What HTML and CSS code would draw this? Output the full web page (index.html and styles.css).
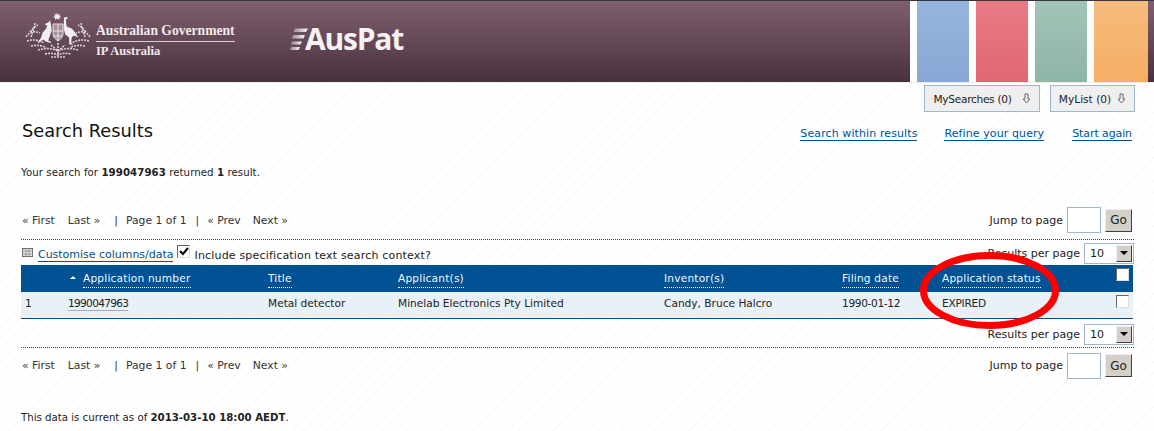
FILE: index.html
```html
<!DOCTYPE html>
<html lang="en">
<head>
<meta charset="utf-8">
<title>AusPat Search Results</title>
<link rel="stylesheet" href="styles.css">
</head>
<body>
<header class="banner">
  <div class="gov">
    <svg class="crest" width="66" height="47" viewBox="0 0 66 47">
      <g fill="none" stroke="#d9d2d6" stroke-width="1.600" stroke-dasharray="2 1">
        <path d="M1 25c4-6 9-6 14-4M2 29c6-2 12-1 17 2M6 34c5-1 11-1 15 2M5 20c3-4 6-6 8-7M9 16l1-5M6 25l3-9"/>
        <path d="M65 25c-4-6-9-6-14-4M64 29c-6-2-12-1-17 2M60 34c-5-1-11-1-15 2M61 20c-3-4-6-6-8-7M57 16l-1-5M60 25l-3-9"/>
        <path d="M13 38c7-2 14-2 20 1 6-3 13-3 20-1M20 42c5-1 9-1 13 1 4-2 8-2 13-1M26 45h14M33 31v13M26 33l7 6 7-6"/>
      </g>
      <g fill="#f3eff1">
        <path d="M32 .500l1 2.200 2.300-.7-1 2.100 2.100 1.100-2.300.5.2 2.300-2.300-1.500-2 1.500.2-2.300-2.300-.5 2.100-1.100-1-2.100 2.300.7z"/>
        <path d="M25 8l-1.500 2.500-3 1-.3 1.500 2 .6-1 3-3.500 4-1.500 5-3.500 5 1 .5 4.500-3.500 2.500 2 5 1.500.5-1-3-1.500 1.500-4 2-6-.5-4.500z"/>
        <path d="M39 5.500l3-.5.7 1.500-2 1 1 7 5 2 3.500 4 3 5-4.500-2-2 2-.5 5.500 2 1.500-4 0 0-7-4-3-1.500-6z"/>
      </g>
      <path d="M28 12h10v9c0 4-2 6-5 8-3-2-5-4-5-8z" fill="#a58e99" stroke="#e8e2e5"/>
      <path d="M33 12v17M28 19h10M28 24h9" stroke="#e8e2e5" fill="none"/>
    </svg>
    <div class="gov-text">
      <div class="gov-name">Australian Government</div>
      <div class="gov-org">IP Australia</div>
    </div>
  </div>
  <div class="brand">
    <svg class="brand-mark" width="20" height="24" viewBox="0 0 20 24">
      <defs>
        <linearGradient id="fade" x1="0" x2="1" y1="0" y2="0">
          <stop offset="0" stop-color="#d8d0d4" stop-opacity=".5"/>
          <stop offset="1" stop-color="#ffffff"/>
        </linearGradient>
      </defs>
      <g fill="url(#fade)">
        <path d="M5 1.500h13l-2 3.500H3.500z"/>
        <path d="M3 8h12l-1.500 3.500H2z"/>
        <path d="M2 14.500h10l-1.500 3H1z"/>
        <path d="M1 20h9l-1.500 3H0z"/>
      </g>
    </svg>
    <span class="brand-name">AusPat</span>
  </div>
  <div class="tiles">
    <span class="tile tile-blue"></span>
    <span class="tile tile-red"></span>
    <span class="tile tile-green"></span>
    <span class="tile tile-orange"></span>
  </div>
</header>

<main class="page">
  <div class="my-bar">
    <a class="my-btn my-searches"><span class="my-label">MySearches (0)</span> <svg width="9" height="11" viewBox="0 0 9 11"><path d="M3 1h3v5h2L4.500 10 1 6h2z" fill="none" stroke="#666"/></svg></a>
    <a class="my-btn my-list">MyList (0) <svg width="9" height="11" viewBox="0 0 9 11"><path d="M3 1h3v5h2L4.500 10 1 6h2z" fill="none" stroke="#666"/></svg></a>
  </div>

  <div class="title-row">
    <h1>Search Results</h1>
    <nav class="actions">
      <a href="#" class="within">Search within results</a>
      <a href="#">Refine your query</a>
      <a href="#" class="start">Start again</a>
    </nav>
  </div>

  <p class="summary">Your search for <b>199047963</b> returned <b>1</b> result.</p>

  <div class="pager pager-top">
    <div class="pager-links"><span class="first">« First</span><span class="last">Last »</span><span class="sep">|</span><span class="page-n">Page 1 of 1</span><span class="sep">|</span><span class="prev">« Prev</span><span>Next »</span></div>
    <div class="jump"><span>Jump to page</span><span class="jump-input"></span><span class="go">Go</span></div>
  </div>

  <div class="tools">
    <svg class="grid-icon" width="11" height="9" viewBox="0 0 11 9"><rect x=".5" y=".5" width="10" height="8" fill="#e8e8e8" stroke="#666"/><path d="M0 3h11M0 6h11M4 0v9M7 0v9" stroke="#999"/></svg>
    <a href="#" class="customise">Customise columns/data</a>
    <span class="check checked"><svg width="10" height="9" viewBox="0 0 10 9"><path d="M1 4l3 3 5-6" fill="none" stroke="#000" stroke-width="2"/></svg></span>
    <span class="context">Include specification text search context?</span>
    <div class="per-page"><span>Results per page</span><span class="select"><span>10</span><span class="arrow"></span></span></div>
  </div>

  <table class="results">
    <thead>
      <tr>
        <th class="c-idx"></th>
        <th class="c-num"><span class="sort"></span><span class="hd">Application number</span></th>
        <th class="c-title"><span class="hd">Title</span></th>
        <th class="c-app"><span class="hd">Applicant(s)</span></th>
        <th class="c-inv"><span class="hd">Inventor(s)</span></th>
        <th class="c-date"><span class="hd">Filing date</span></th>
        <th class="c-status"><span class="hd">Application status</span></th>
        <th class="c-check"><span class="check head-check"></span></th>
      </tr>
    </thead>
    <tbody>
      <tr>
        <td class="c-idx">1</td>
        <td class="c-num"><a href="#" class="num-link">1990047963</a></td>
        <td>Metal detector</td>
        <td>Minelab Electronics Pty Limited</td>
        <td>Candy, Bruce Halcro</td>
        <td class="date">1990-01-12</td>
        <td class="status">EXPIRED</td>
        <td class="c-check"><span class="check"></span></td>
      </tr>
    </tbody>
  </table>

  <div class="per-page per-page-bottom"><span>Results per page</span><span class="select"><span>10</span><span class="arrow"></span></span></div>

  <div class="pager pager-bottom">
    <div class="pager-links"><span class="first">« First</span><span class="last">Last »</span><span class="sep">|</span><span class="page-n">Page 1 of 1</span><span class="sep">|</span><span class="prev">« Prev</span><span>Next »</span></div>
    <div class="jump"><span>Jump to page</span><span class="jump-input"></span><span class="go">Go</span></div>
  </div>

  <p class="current">This data is current as of <b>2013-03-10 18:00 AEDT</b>.</p>
</main>

<svg class="ring" width="144" height="82" viewBox="0 0 144 82"><ellipse cx="71.500" cy="40.500" rx="66" ry="35" fill="none" stroke="#f00" stroke-width="7"/></svg>
</body>
</html>
```
FILE: styles.css
```css
* { box-sizing: border-box; }
html, body { margin: 0; padding: 0; }
body {
  position: relative;
  width: 1154px;
  height: 431px;
  overflow: hidden;
  font-family: "DejaVu Sans", Verdana, sans-serif;
  font-size: 10.600px;
  color: #222;
  background: repeating-linear-gradient(135deg, #fff 0 7px, #f8f9fb 7px 8px);
}
a { color: inherit; text-decoration: none; }

.banner {
  display: flex;
  height: 82px;
  border-top: 1px solid #3a3440;
  background: linear-gradient(#7f5f6d, #483140);
  color: #efe9ec;
  box-shadow: 0 1px 0 #eee;
}
.gov { display: flex; width: 270px; padding: 11px 0 0 25px; }
.crest { flex: none; margin-right: 5px; }
.gov-text { font-family: "Liberation Serif", serif; font-weight: bold; padding-top: 11px; }
.gov-name {
  font-size: 13.600px;
  line-height: 16px;
  width: 139px;
  white-space: nowrap;
  border-bottom: 1px solid #d8d0d4;
  padding-bottom: 2px;
}
.gov-org { font-size: 12.500px; line-height: 16px; padding-top: 1px; }
.brand { display: flex; align-items: center; height: 50px; padding: 26px 0 0 20px; width: 640px; }
.brand-mark { flex: none; margin-right: -5px; }
.brand-name { font-family: "Open Sans", sans-serif; font-size: 30px; font-weight: 700; color: #f6f2f4; letter-spacing: -1.200px; line-height: 30px; }
.tiles { display: flex; background: #fff; height: 81px; padding-left: 7px; gap: 7px; flex: none; width: 238px; }
.tile { display: block; width: 52px; }
.tile-blue { background: linear-gradient(#96b5dd, #87a8d5); }
.tile-red { background: linear-gradient(#e87b86, #e06672); }
.tile-green { background: linear-gradient(#a2c4b6, #8fb5a6); }
.tile-orange { background: linear-gradient(#f6bb7c, #f5ae64); width: 54px; }

.page { padding: 0 22px 0 21px; }

.my-bar { display: flex; justify-content: flex-end; gap: 10px; padding: 3px 0 0; margin-right: -3px; }
.my-btn {
  display: flex;
  align-items: center;
  justify-content: center;
  gap: 6px;
  height: 27px;
  background: #efefef;
  border: 1px solid #a3b5cc;
  color: #222;
}
.my-searches { width: 116px; gap: 10px; }
.my-label { letter-spacing: -.3px; }
.my-list { width: 85px; }

.title-row { display: flex; justify-content: space-between; align-items: center; height: 26px; margin-top: 5px; padding-left: 1px; }
h1 { margin: 0; font-size: 17.800px; font-weight: normal; color: #111; }
.actions { display: flex; gap: 28px; padding-top: 7px; }
.actions a { color: #00508f; border-bottom: 1px solid #00508f; line-height: 13px; font-size: 11px; letter-spacing: .1px; }
.actions .within { margin-right: -1px; }
.actions .start { letter-spacing: -.1px; }

.summary { margin: 23px 0 0; height: 14px; line-height: 14px; font-size: 10.200px; letter-spacing: .07px; }
.summary b, .current b { color: #222; }

.pager { display: flex; justify-content: space-between; align-items: center; }
.pager-top { margin-top: 27px; height: 26px; }
.pager-links { display: flex; padding-left: 1px; color: #333; font-size: 10.800px; }
.first { margin-right: 13px; }
.last { margin-right: 14px; }
.sep { margin-right: 8px; }
.page-n { margin-right: 9px; }
.prev { margin-right: 12px; }
.jump { display: flex; align-items: center; font-size: 11px; }
.jump-input { width: 34px; height: 26px; background: #fff; border: 1px solid #a3b5cc; margin: 0 4px; }
.go {
  display: flex; align-items: center; justify-content: center;
  width: 27px; height: 23px;
  background: #d4d0c8;
  border: 1px solid;
  border-color: #eee #404040 #404040 #eee;
  font-size: 12px;
}

.tools {
  position: relative;
  display: flex;
  align-items: center;
  height: 27px;
  margin-top: 6px;
  margin-right: -2px;
  border-top: 1px dotted #444;
  padding-left: 1px;
  font-size: 11px;
}
.grid-icon { flex: none; margin-right: 5px; margin-top: -2px; }
.customise { color: #00508f; border-bottom: 1px solid #00508f; line-height: 13px; margin-right: 4px; margin-top: 4px; letter-spacing: -.02px; }
.check {
  display: inline-flex;
  align-items: center;
  justify-content: center;
  width: 13px;
  height: 13px;
  background: #fff;
  border: 1px solid;
  border-color: #666 #ddd #ddd #666;
}
.checked { margin-right: 4px; margin-top: -3px; }
.context { margin-top: 4px; letter-spacing: .18px; }
.per-page { display: flex; align-items: center; gap: 4px; font-size: 11px; }
.tools .per-page { margin-left: auto; margin-right: 0; }
.select {
  display: flex; align-items: center; justify-content: space-between;
  width: 50px; height: 21px;
  background: #fff;
  border: 1px solid #a3b5cc;
  padding: 0 1px 0 5px;
}
.arrow {
  display: flex; align-items: center; justify-content: center;
  width: 16px; height: 17px;
  background: #d4d0c8;
  border: 1px solid;
  border-color: #eee #404040 #404040 #eee;
}
.arrow::after { content: ""; border: 4px solid transparent; border-top: 4px solid #000; border-bottom: 0; }

.results { width: 1112px; border-collapse: collapse; table-layout: fixed; border-bottom: 1px solid #00508f; position: relative; z-index: 1; margin-top: -1px; }
.results th {
  height: 27px;
  background: #005294;
  color: #f4f7fb;
  font-weight: normal;
  text-align: left;
  padding: 0 0 1px;
}
.results td {
  height: 26px;
  background: #e8f0f8;
  padding: 0 0 3px;
}
.hd { border-bottom: 1px dotted #fff; padding-bottom: 3px; letter-spacing: .2px; }
.c-idx { width: 47px; }
.results td.c-idx { padding-left: 4px; }
.c-num { width: 200px; }
.c-title { width: 130px; }
.c-app { width: 266px; }
.c-inv { width: 178px; }
.c-date { width: 100px; }
.c-status { width: 174px; }
.results .c-check { vertical-align: top; padding: 3px 0 0; }
.c-check .check { display: flex; }
th.c-num { position: relative; }
.results th.c-num { padding-left: 15px; }
.sort {
  position: absolute;
  left: 2px;
  top: 11px;
  border: 3px solid transparent;
  border-bottom: 3px solid #fff;
  border-top: 0;
}
.num-link { border-bottom: 1px solid #aaa; padding-bottom: 1px; letter-spacing: -.7px; }
.date { letter-spacing: -.35px; }
.status { letter-spacing: -.25px; }

.per-page-bottom { justify-content: flex-end; height: 21px; margin-top: 5px; margin-right: -2px; }
.pager-bottom { margin-top: 2px; margin-right: -2px; padding-right: 2px; border-top: 1px dotted #444; height: 34px; padding-top: 3px; }

.current { margin: 30px 0 0; line-height: 14px; font-size: 10.200px; }

.ring { position: absolute; left: 918px; top: 250px; z-index: 2; }
```
